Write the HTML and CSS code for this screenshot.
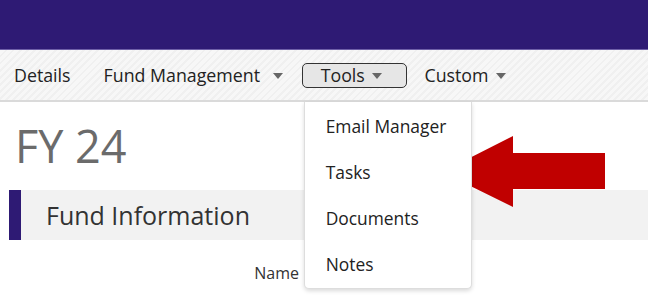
FILE: index.html
```html
<!DOCTYPE html>
<html>
<head>
  <link rel="stylesheet" href="styles.css">
</head>
<body>
  <div class="top-bar"></div>

  <nav class="fund-nav">
    <a class="fund-nav-item fund-nav-details">Details</a>
    <a class="fund-nav-item fund-nav-fund">Fund Management <span class="fund-nav-caret"></span></a>
    <div class="fund-nav-tools">
      <a class="fund-nav-item fund-nav-active">Tools <span class="fund-nav-caret"></span></a>
      <!-- Open dropdown for the Tools menu -->
      <ul class="fund-dropdown">
        <li class="fund-dropdown-item">Email Manager</li>
        <li class="fund-dropdown-item">Tasks</li>
        <li class="fund-dropdown-item">Documents</li>
        <li class="fund-dropdown-item">Notes</li>
      </ul>
    </div>
    <a class="fund-nav-item fund-nav-custom">Custom <span class="fund-nav-caret"></span></a>
  </nav>

  <main class="fund-content">
    <h1 class="fund-title">FY 24</h1>
    <div class="fund-section">
      <h2 class="fund-section-title">Fund Information</h2>
    </div>
    <div class="fund-field">
      <label class="fund-field-label">Name</label>
    </div>
  </main>

  <!-- Red callout arrow pointing at Tasks -->
  <svg class="callout-arrow" width="163" height="71" viewBox="0 0 163 71">
    <polygon points="0,36 71,0 71,17 163,17 163,53 71,53 71,71" fill="#c00000" />
  </svg>
</body>
</html>
```

FILE: styles.css
```css
/* Page basics */
body {
  margin: 0;
  min-height: 305px;
  font-family: "Open Sans", "Noto Sans", sans-serif;
  color: #222;
  background-color: #fff;
  position: relative;
}

/* Purple header strip */
.top-bar {
  height: 49px;
  background-color: #2e1a74;
  border-bottom: 1px solid #6e5fa8;
}

/* Navigation bar */
.fund-nav {
  display: flex;
  align-items: center;
  height: 50px;
  padding-left: 14px;
  background: repeating-linear-gradient(-45deg, #f7f7f7 0 3px, #f0f0f0 3px 5px);
  border-bottom: 2px solid #dadada;
}

.fund-nav-item {
  display: flex;
  align-items: center;
  font-size: 17.8px;
  color: #222;
  white-space: pre;
  cursor: pointer;
}

.fund-nav-details {
  margin-right: 33px;
}

/* Small grey down arrow */
.fund-nav-caret {
  width: 0;
  height: 0;
  margin-left: 3px;
  margin-top: 2px;
  border-left: 5.5px solid transparent;
  border-right: 5.5px solid transparent;
  border-top: 6px solid #666;
}

.fund-nav-fund .fund-nav-caret {
  margin-left: 8px;
}

.fund-nav-tools {
  position: relative;
  margin-left: 19px;
}

/* Selected menu item gets an outlined button */
.fund-nav-active {
  height: 23px;
  padding: 0 24px 0 18px;
  background-color: #e6e6e6;
  border: 1.5px solid #333;
  border-radius: 5px;
}

.fund-nav-custom {
  margin-left: 17px;
}

/* Tools dropdown */
.fund-dropdown {
  position: absolute;
  left: 2px;
  top: 39px;
  width: 166px;
  margin: 0;
  padding: 1px 0 0;
  list-style: none;
  background-color: #fff;
  border: 1px solid #ddd;
  border-top: none;
  border-radius: 0 0 5px 5px;
  box-shadow: 0 2px 4px rgba(0, 0, 0, 0.15);
  z-index: 10;
}

.fund-dropdown-item {
  padding-left: 21px;
  line-height: 46.3px;
  font-size: 17.4px;
  color: #222;
}

/* Main content */
.fund-content {
  padding-left: 9px;
}

.fund-title {
  margin: 18px 0 0 6px;
  font-size: 45px;
  font-weight: 400;
  line-height: 52px;
  color: #6b6b6b;
}

/* Section header with purple marker */
.fund-section {
  margin-top: 18px;
  height: 50px;
  background-color: #f2f2f2;
  border-left: 12px solid #2e1a74;
}

.fund-section-title {
  margin: 0;
  padding-left: 25px;
  font-size: 25px;
  font-weight: 400;
  line-height: 50px;
  color: #333;
}

.fund-field {
  display: flex;
  margin-top: 22px;
}

.fund-field-label {
  width: 290px;
  text-align: right;
  font-size: 16px;
  line-height: 22px;
  color: #333;
}

/* Annotation arrow */
.callout-arrow {
  position: absolute;
  left: 442px;
  top: 136px;
}
```
